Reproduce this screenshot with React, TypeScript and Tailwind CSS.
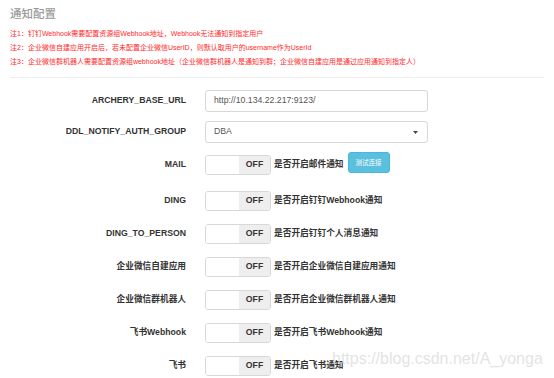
const notes = [
  '注1：钉钉Webhook需要配置资源组Webhook地址，Webhook无法通知到指定用户',
  '注2：企业微信自建应用开启后，若未配置企业微信UserID，则默认取用户的username作为UserId',
  '注3：企业微信群机器人需要配置资源组webhook地址（企业微信群机器人是通知到群；企业微信自建应用是通过应用通知到指定人）',
]

const switches = [
  { name: 'MAIL', desc: '是否开启邮件通知', test: true },
  { name: 'DING', desc: '是否开启钉钉Webhook通知' },
  { name: 'DING_TO_PERSON', desc: '是否开启钉钉个人消息通知' },
  { name: '企业微信自建应用', desc: '是否开启企业微信自建应用通知' },
  { name: '企业微信群机器人', desc: '是否开启企业微信群机器人通知' },
  { name: '飞书Webhook', desc: '是否开启飞书Webhook通知' },
  { name: '飞书', desc: '是否开启飞书通知' },
]

function Label({ children }: { children: React.ReactNode }) {
  return (
    <div className="w-[176px] shrink-0 text-right text-[8.7px] font-bold text-[#333]">
      {children}
    </div>
  )
}

function Toggle() {
  return (
    <div className="flex h-[20px] w-[66px] shrink-0 overflow-hidden rounded-[3px] border border-[#d8d8d8]">
      <div className="w-[33px] bg-white" />
      <div className="flex flex-1 items-center justify-center bg-[#eee] text-[8.7px] font-bold text-[#333]">
        OFF
      </div>
    </div>
  )
}

export default function App() {
  return (
    <div
      className="relative h-[378px] w-[554px] overflow-hidden bg-white"
      style={{ fontFamily: '"Liberation Sans", "Noto Sans CJK SC", sans-serif' }}
    >
      <div className="px-[10px] pt-[7px]">
        <div className="text-[11.5px] font-medium leading-[14px] text-[#999]">通知配置</div>
        <div className="mt-[6px]">
          {notes.map((n) => (
            <div key={n} className="whitespace-nowrap text-[7px] leading-[14px] text-[#ff2a2a]">
              {n}
            </div>
          ))}
        </div>
        <div className="mt-[8px] border-t border-[#eee]" />
      </div>

      {/* form */}
      <div className="mt-[12px] flex flex-col pl-[10px]">
        <div className="flex items-center gap-[19px]">
          <Label>ARCHERY_BASE_URL</Label>
          <div className="flex h-[22px] w-[223px] items-center rounded-[3px] border border-[#d8d8d8] px-[8px] text-[8.7px] text-[#555]">
            http://10.134.22.217:9123/
          </div>
        </div>

        <div className="mt-[9px] flex items-center gap-[19px]">
          <Label>DDL_NOTIFY_AUTH_GROUP</Label>
          <div className="flex h-[22px] w-[223px] items-center justify-between rounded-[3px] border border-[#d8d8d8] pl-[8px] pr-[9px] text-[8.7px] text-[#555]">
            <span>DBA</span>
            <svg width="5" height="3" viewBox="0 0 5 3">
              <path d="M0 0h5L2.5 3z" fill="#444" />
            </svg>
          </div>
        </div>

        {switches.map((s, i) => (
          <div
            key={s.name}
            className={(i === 0 ? 'mt-[9px]' : 'mt-[13px]') + ' flex items-center'}
          >
            <Label>{s.name}</Label>
            <div className="ml-[19px] flex items-center">
              <Toggle />
              <span className="ml-[3px] whitespace-nowrap text-[8.7px] font-bold text-[#333]">{s.desc}</span>
              {s.test && (
                <button className="mb-[5px] ml-[4px] flex h-[21px] w-[42px] items-center justify-center rounded-[3px] border border-[#46b8da] bg-[#5bc0de] text-[6.5px] text-white">
                  测试连接
                </button>
              )}
            </div>
          </div>
        ))}
      </div>

      {/* watermark */}
      <div className="pointer-events-none absolute left-[332px] top-[351px] whitespace-nowrap text-[16px] leading-none text-[#dcdcdc]/80">
        https://blog.csdn.net/A_yonga
      </div>
    </div>
  )
}
